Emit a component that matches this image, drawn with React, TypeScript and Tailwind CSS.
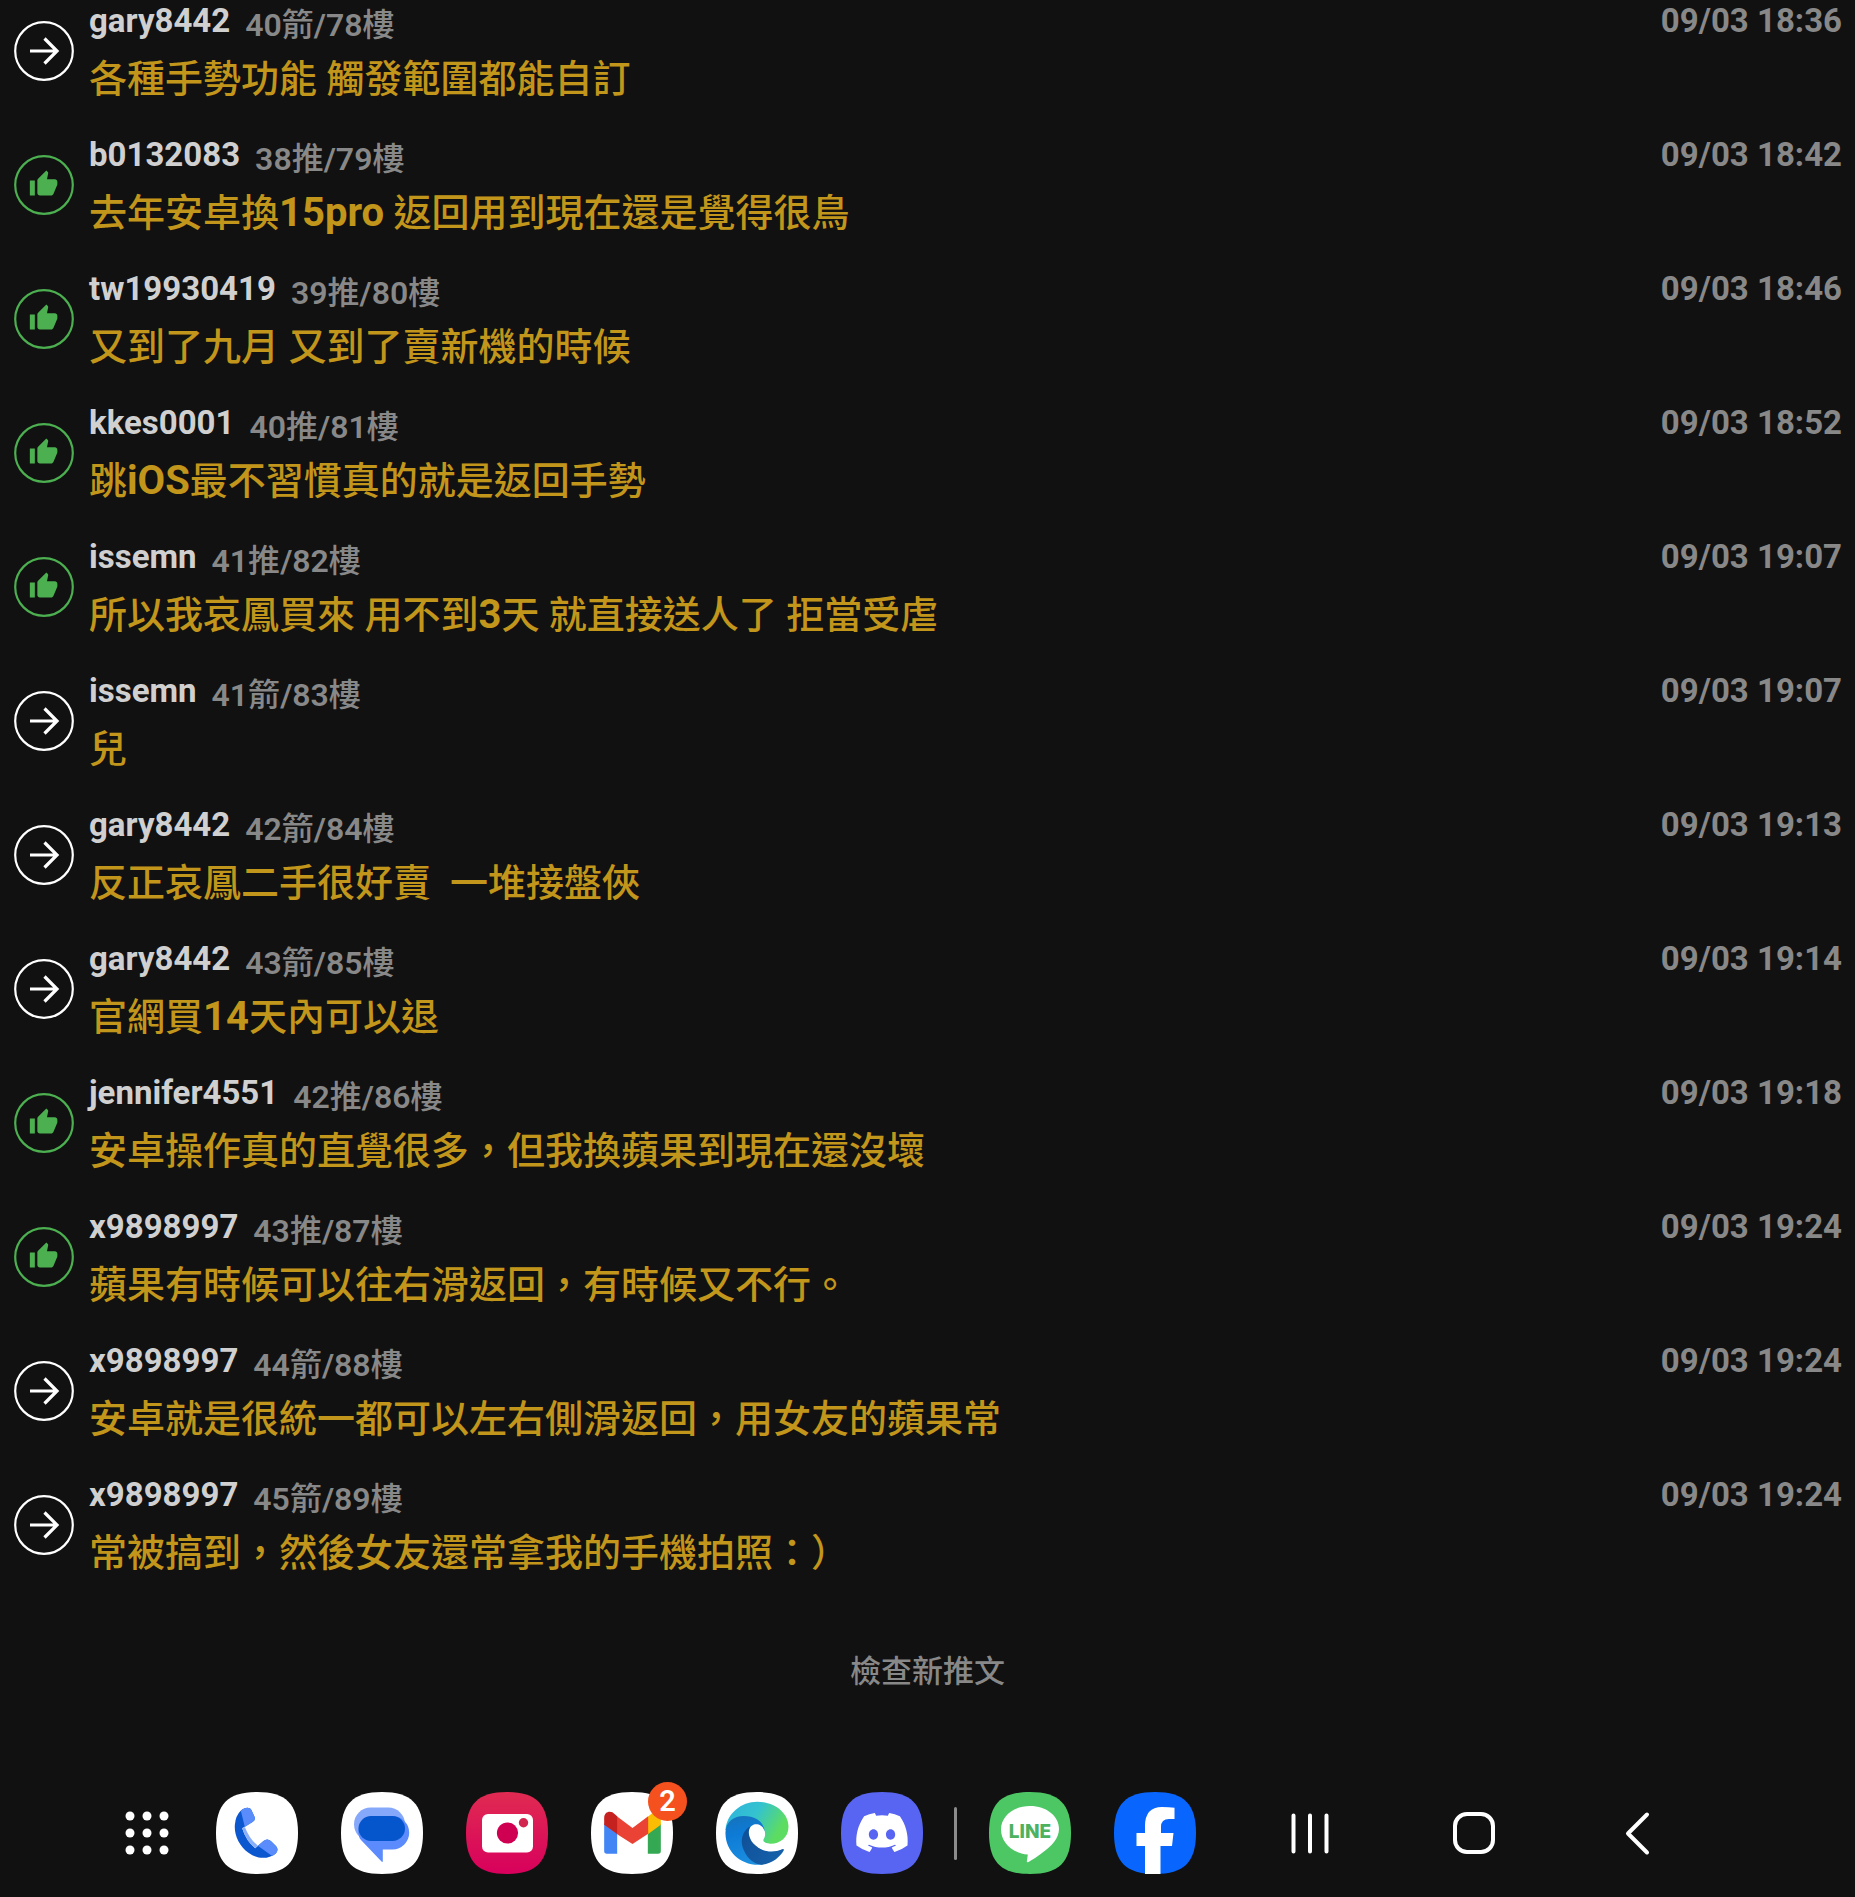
import React from "react";
import { FaDiscord } from "react-icons/fa";

type Comment = { up: boolean; user: string; meta: string; text: string; time: string };

const comments: Comment[] = [
  { up: false, user: "gary8442", meta: "40箭/78樓", text: "各種手勢功能 觸發範圍都能自訂", time: "09/03 18:36" },
  { up: true, user: "b0132083", meta: "38推/79樓", text: "去年安卓換15pro 返回用到現在還是覺得很鳥", time: "09/03 18:42" },
  { up: true, user: "tw19930419", meta: "39推/80樓", text: "又到了九月 又到了賣新機的時候", time: "09/03 18:46" },
  { up: true, user: "kkes0001", meta: "40推/81樓", text: "跳iOS最不習慣真的就是返回手勢", time: "09/03 18:52" },
  { up: true, user: "issemn", meta: "41推/82樓", text: "所以我哀鳳買來 用不到3天 就直接送人了 拒當受虐", time: "09/03 19:07" },
  { up: false, user: "issemn", meta: "41箭/83樓", text: "兒", time: "09/03 19:07" },
  { up: false, user: "gary8442", meta: "42箭/84樓", text: "反正哀鳳二手很好賣  一堆接盤俠", time: "09/03 19:13" },
  { up: false, user: "gary8442", meta: "43箭/85樓", text: "官網買14天內可以退", time: "09/03 19:14" },
  { up: true, user: "jennifer4551", meta: "42推/86樓", text: "安卓操作真的直覺很多，但我換蘋果到現在還沒壞", time: "09/03 19:18" },
  { up: true, user: "x9898997", meta: "43推/87樓", text: "蘋果有時候可以往右滑返回，有時候又不行。", time: "09/03 19:24" },
  { up: false, user: "x9898997", meta: "44箭/88樓", text: "安卓就是很統一都可以左右側滑返回，用女友的蘋果常", time: "09/03 19:24" },
  { up: false, user: "x9898997", meta: "45箭/89樓", text: "常被搞到，然後女友還常拿我的手機拍照：）", time: "09/03 19:24" },
];

const SQUIRCLE = "M41 0C70 0 82 12 82 41S70 82 41 82 0 70 0 41 12 0 41 0Z";

function ArrowBadge() {
  return (
    <svg viewBox="0 0 60 60" className="size-[60px] shrink-0" fill="none" stroke="#fff">
      <circle cx="30" cy="30" r="28.8" strokeWidth="2.2" />
      <path d="M16 30h26M30.5 17.5 43 30 30.5 42.5" strokeWidth="3.2" />
    </svg>
  );
}

function ThumbBadge() {
  return (
    <svg viewBox="0 0 60 60" className="size-[60px] shrink-0">
      <circle cx="30" cy="30" r="28.8" fill="none" stroke="#4caf50" strokeWidth="2.2" />
      <path
        transform="translate(14.6 14.2) scale(1.25)"
        fill="#4caf50"
        d="M1 21h4V9H1v12zm22-11c0-1.1-.9-2-2-2h-6.31l.95-4.57.03-.32c0-.41-.17-.79-.44-1.06L14.17 1 7.59 7.59C7.22 7.95 7 8.45 7 9v10c0 1.1.9 2 2 2h9c.83 0 1.54-.5 1.84-1.22l3.02-7.05c.09-.23.14-.47.14-.73v-2z"
      />
    </svg>
  );
}

// Latin runs are set heavier than the Chinese around them.
function Mixed({ text, latin }: { text: string; latin: string }) {
  return (
    <>
      {text.split(/([A-Za-z0-9/]+)/).map((part, i) =>
        i % 2 ? (
          <span key={i} className={latin}>
            {part}
          </span>
        ) : (
          part
        ),
      )}
    </>
  );
}

function CommentRow({ c }: { c: Comment }) {
  return (
    <li className="flex h-[134px] items-start gap-[15px] pt-px pr-[13px] pl-[14px]">
      <div className="pt-5">{c.up ? <ThumbBadge /> : <ArrowBadge />}</div>
      <div className="min-w-0 flex-1">
        <div className="flex h-11 items-start">
          <span className="text-[33px] leading-10 font-bold text-[#d0d0d0]">{c.user}</span>
          <span className="ml-[15px] pt-1 text-[32px] leading-10 text-[#888888]">
            <Mixed text={c.meta} latin="font-semibold" />
          </span>
          <time className="ml-auto text-[33px] leading-10 font-bold text-[#888888]">{c.time}</time>
        </div>
        <p className="text-[38px] leading-[68px] whitespace-pre text-[#c2951b]">
          <Mixed text={c.text} latin="text-[40px] font-bold" />
        </p>
      </div>
    </li>
  );
}

function AppIcon({ label, fill, children }: { label: string; fill: string; children: React.ReactNode }) {
  return (
    <button type="button" aria-label={label} className="block size-[82px] shrink-0">
      <svg viewBox="0 0 82 82" className="size-full">
        <path d={SQUIRCLE} fill={fill} />
        {children}
      </svg>
    </button>
  );
}

export default function App() {
  return (
    <div className="min-h-screen bg-[#111111] font-['Roboto','Noto_Sans_CJK_TC',sans-serif] font-medium">
      <ul lang="zh-Hant">{comments.map((c, i) => <CommentRow key={i} c={c} />)}</ul>
      <div className="flex justify-center pt-11">
        <button type="button" className="text-[31px] leading-10 text-[#888888]">檢查新推文</button>
      </div>
      <nav className="mt-[100px] flex items-center pb-[22px] pl-[121px]">
        <div className="flex items-center gap-[43px]">
          <button type="button" aria-label="Apps" className="w-[52px]">
            <svg viewBox="0 0 52 52" className="w-full" fill="#fff">
              {[9, 26, 43].map((y) => [9, 26, 43].map((x) => <circle key={`${x}-${y}`} cx={x} cy={y} r="4.5" />))}
            </svg>
          </button>
          <AppIcon label="Phone" fill="#fff">
            <g transform="translate(-6.5 -7) scale(.3333)">
              <path d="M95 76C105 68 120 64 126 76L135 95Q139 106 129 111L98 130Q110 168 137 190L162 168Q173 159 184 168L200 184Q209 196 198 206C178 222 146 224 118 204C88 182 74 150 76 120Q78 92 95 76Z" fill="#0b57d0" />
              <path d="M94 77C105 68 120 64 126 76L135 95Q139 106 129 111L106 126ZM145 182L162 168Q173 159 184 168L200 184Q209 196 198 206L188 213Z" fill="#5a8cfb" />
              <path d="M98 130 106 126Q120 162 145 182L137 190Q110 168 98 130Z" fill="#8ab0fb" />
            </g>
          </AppIcon>
          <AppIcon label="Messages" fill="#fff">
            <rect x="13" y="15.5" width="51" height="33.5" rx="16.7" fill="#86a8fa" />
            <path d="M34 24h17.5a16.7 16.7 0 0 1 0 33.4H41.8V69q0 1.5-1.3.5L20 48C14 40 18 25 34 24Z" fill="#5b8bfc" />
            <rect x="17.5" y="24" width="46.5" height="25" rx="12.5" fill="#0555cd" />
          </AppIcon>
          <AppIcon label="Camera" fill="url(#camBg)">
            <defs>
              <linearGradient id="camBg" x1="0" y1="0" x2="0" y2="1">
                <stop offset="0" stopColor="#e02b52" />
                <stop offset="1" stopColor="#d8005c" />
              </linearGradient>
            </defs>
            <rect x="16" y="22" width="51" height="38.5" rx="6" fill="#fff" />
            <circle cx="41.5" cy="41" r="10.6" fill="#cf0051" />
            <circle cx="57.5" cy="30.7" r="4.7" fill="#d22650" />
          </AppIcon>
          <div className="relative">
            <AppIcon label="Gmail" fill="#fff">
              <g transform="translate(-6.5 -17.3) scale(.3333)">
                <path d="M59 146 98 173V237H67Q59 237 59 229Z" fill="#4285f4" />
                <path d="M190 173 229 146V229Q229 237 221 237H190Z" fill="#34a853" />
                <path d="M190 126 203 116C215 106 229 112 229 128V150L190 179Z" fill="#fbbc04" />
                <path d="M97 125 144 160 191 125V177L144 208 97 178Z" fill="#ea4335" />
                <path d="M59 150V130C59 110 80 106 91 119L98 125V178Z" fill="#c5221f" />
              </g>
            </AppIcon>
            <span className="absolute -top-[10px] -right-[14px] flex size-[39px] items-center justify-center rounded-full bg-[#f4511e] text-[29px] font-semibold text-white">2</span>
          </div>
          <AppIcon label="Edge" fill="#fff">
            <defs>
              <linearGradient id="edgeTop" x1="0" y1=".2" x2="1" y2=".6">
                <stop offset="0" stopColor="#2fb4dc" />
                <stop offset=".45" stopColor="#34c3cf" />
                <stop offset=".9" stopColor="#5ddc62" />
              </linearGradient>
              <linearGradient id="edgeMid" x1=".3" y1="0" x2=".5" y2="1">
                <stop offset="0" stopColor="#1573bd" />
                <stop offset=".35" stopColor="#0d7bd6" />
                <stop offset="1" stopColor="#1c8fe0" />
              </linearGradient>
              <linearGradient id="edgeLow" x1="0" y1="0" x2="1" y2=".6">
                <stop offset="0" stopColor="#0f4f96" />
                <stop offset="1" stopColor="#1560aa" />
              </linearGradient>
            </defs>
            <g transform="translate(-6.5 -7) scale(.3333)">
              <path d="M48 135C52 85 95 50 143 50C200 50 238 88 237 125C237 160 208 177 182 176C166 175 158 169 163 161C172 148 166 120 140 118L100 140Z" fill="url(#edgeTop)" />
              <path d="M48 147C46 112 72 93 103 93C135 93 160 108 165 135L145 190 158 239C95 245 49 200 48 147Z" fill="url(#edgeMid)" />
              <path d="M120 125C98 140 90 168 103 196C115 225 140 240 158 239C190 236 212 215 223 196Q224 190 217 193C195 203 165 202 145 187Z" fill="url(#edgeLow)" />
              <path d="M118 144C118 106 165 113 165 143C165 152 160 158 160 166C161 174 170 177 182 177L216 193C160 210 120 178 118 144Z" fill="#fff" />
            </g>
          </AppIcon>
          <AppIcon label="Discord" fill="#5865f2">
            <FaDiscord x="13" y="12.5" size={56} color="#fff" />
          </AppIcon>
        </div>
        <div className="mr-8 ml-[31px] h-[53px] w-[3px] rounded-full bg-[#8c8c8c]" />
        <div className="flex gap-[43px]">
          <AppIcon label="LINE" fill="#4cc764">
            <path d="M41 14c16.5 0 29 10 29 23 0 9-7 17-17 24-5 4-10 7-13.5 9-1.5.8-2 0-1.5-1.5l.8-6C22 61 12 49.5 12 37.5 12 24.5 24.5 14 41 14Z" fill="#fff" />
            <text x="41" y="45.5" textAnchor="middle" fontSize="19" fontWeight="800" fontFamily="Inter, Roboto, sans-serif" fill="#4cb25f">LINE</text>
          </AppIcon>
          <AppIcon label="Facebook" fill="#0866ff">
            <path d="M31 82V54H22.500V41H31V34Q31 15 48 15q7 0 12.500.8V27H55q-8 0-8 8v6h12.500L58 54H46.500V82Z" fill="#fff" />
          </AppIcon>
        </div>
        <div className="ml-[73px] flex gap-[82px]">
          <button type="button" aria-label="Recents" className="size-[82px]">
            <svg viewBox="0 0 82 82" className="size-full" stroke="#fff" strokeWidth="4" strokeLinecap="round">
              <path d="M24.5 23.5v36M41 23.5v36M57.5 23.5v36" />
            </svg>
          </button>
          <button type="button" aria-label="Home" className="size-[82px]">
            <svg viewBox="0 0 82 82" className="size-full" fill="none" stroke="#fff" strokeWidth="4">
              <rect x="22" y="22" width="38" height="38" rx="12" />
            </svg>
          </button>
          <button type="button" aria-label="Back" className="size-[82px]">
            <svg viewBox="0 0 82 82" className="size-full" fill="none" stroke="#fff" strokeWidth="4" strokeLinecap="round" strokeLinejoin="round">
              <path d="M50 22.5 31 41.5 50 60.5" />
            </svg>
          </button>
        </div>
      </nav>
    </div>
  );
}
